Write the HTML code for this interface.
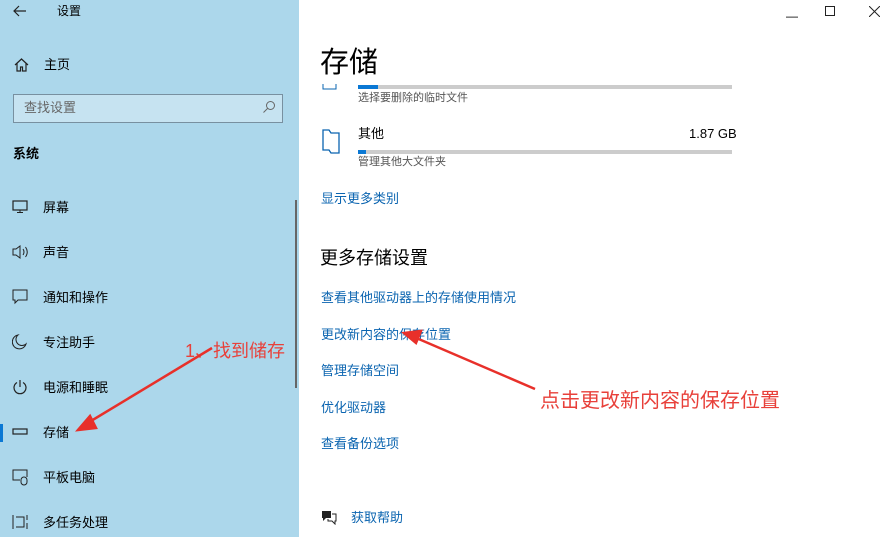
<!DOCTYPE html>
<html><head><meta charset="utf-8"><style>
*{margin:0;padding:0;box-sizing:border-box}
body{width:889px;height:537px;overflow:hidden;position:relative;background:#fff;font-family:"Liberation Sans","Noto Sans CJK SC",sans-serif;color:#000}
.side{position:absolute;left:0;top:0;width:299px;height:537px;background:#acd7eb}
.t{position:absolute;white-space:nowrap;line-height:1}
.s13{font-size:13px}
.lk{color:#0a64b0;font-size:13px}
.bar{position:absolute;height:4px;background:#ccc}
.bar i{position:absolute;left:0;top:0;height:4px;background:#0a78d4}
svg{position:absolute}
</style></head><body>
<div class="side"></div>
<svg style="left:12px;top:4px" width="16" height="14"><path d="M14 7H2M7 2L2 7l5 5" stroke="#222" fill="none" stroke-width="1.2"/></svg>
<div class="t s13" style="left:57px;top:5px;font-size:12px">设置</div>
<svg style="left:14px;top:57px" width="15" height="15"><path d="M1 8L7.5 2 14 8M3 6.5V14h3.5v-4h2v4H12V6.5" stroke="#222" fill="none" stroke-width="1.2"/></svg>
<div class="t s13" style="left:44px;top:58px">主页</div>
<div style="position:absolute;left:13px;top:94px;width:270px;height:29px;border:1.5px solid #7890a0;background:#c6e3f1"></div>
<div class="t s13" style="left:24px;top:101px;color:#666">查找设置</div>
<svg style="left:262px;top:100px" width="14" height="14"><circle cx="8.5" cy="5.5" r="4" stroke="#666" fill="none"/><path d="M6 8L1.5 12.5" stroke="#666"/></svg>
<div class="t s13" style="left:13px;top:147px;font-weight:bold">系统</div>
<svg style="left:12px;top:200px" width="16" height="14"><rect x="1" y="1" width="14" height="9" stroke="#222" fill="none" stroke-width="1.2"/><path d="M5 12.5h6M8 10v2" stroke="#222"/></svg>
<div class="t s13" style="left:43px;top:201px">屏幕</div>
<svg style="left:12px;top:244px" width="18" height="16"><path d="M1 5h3l4-3v12l-4-3H1z" stroke="#222" fill="none"/><path d="M11 5q2 3 0 6M13.5 3q3.5 5 0 10" stroke="#222" fill="none"/></svg>
<div class="t s13" style="left:43px;top:246px">声音</div>
<svg style="left:12px;top:289px" width="16" height="16"><path d="M1 1h14v10H6l-3 3v-3H1z" stroke="#222" fill="none"/></svg>
<div class="t s13" style="left:43px;top:291px">通知和操作</div>
<svg style="left:12px;top:334px" width="16" height="16"><path d="M6 1a7 7 0 1 0 8 9A6 6 0 0 1 6 1z" stroke="#222" fill="none"/></svg>
<div class="t s13" style="left:43px;top:336px">专注助手</div>
<svg style="left:12px;top:379px" width="16" height="16"><path d="M5 3.5a6 6 0 1 0 6 0M8 1v7" stroke="#222" fill="none" stroke-width="1.2"/></svg>
<div class="t s13" style="left:43px;top:381px">电源和睡眠</div>
<div style="position:absolute;left:0;top:424px;width:3px;height:18px;background:#0a78d4"></div>
<svg style="left:12px;top:427px" width="16" height="10"><rect x="1" y="2" width="14" height="5" stroke="#222" fill="none" stroke-width="1.2"/></svg>
<div class="t s13" style="left:43px;top:426px">存储</div>
<svg style="left:12px;top:469px" width="18" height="18"><path d="M8 11H1V1h14v7" stroke="#222" fill="none"/><rect x="9" y="8" width="6" height="8" rx="3" stroke="#222" fill="none"/></svg>
<div class="t s13" style="left:43px;top:471px">平板电脑</div>
<svg style="left:12px;top:514px" width="18" height="16"><path d="M1 1v14M4 3h8v10H4M15 1v5M15 9v6" stroke="#222" fill="none"/></svg>
<div class="t s13" style="left:43px;top:516px">多任务处理</div>
<div style="position:absolute;left:295px;top:200px;width:2px;height:188px;background:#666"></div>

<div class="t" style="left:786px;top:10px;font-size:12px">—</div>
<div style="position:absolute;left:825px;top:6px;width:10px;height:10px;border:1px solid #222"></div>
<svg style="left:869px;top:6px" width="11" height="11"><path d="M0 0L11 11M11 0L0 11" stroke="#222"/></svg>

<div class="t" style="left:320px;top:49px;font-size:29px">存储</div>
<svg style="left:322px;top:84px" width="16" height="8"><path d="M1 0v5h13V0" stroke="#0a64b0" fill="none"/></svg>
<div class="bar" style="left:358px;top:85px;width:374px"><i style="width:20px"></i></div>
<div class="t" style="left:358px;top:93px;font-size:11px;color:#555">选择要删除的临时文件</div>
<svg style="left:322px;top:129px" width="18" height="25"><path d="M1 1h6l2 3h8v20H9l-2-3H1z" stroke="#0a64b0" fill="none" stroke-width="1.3"/></svg>
<div class="t s13" style="left:358px;top:127px">其他</div>
<div class="t" style="left:689px;top:127px;font-size:13px">1.87 GB</div>
<div class="bar" style="left:358px;top:150px;width:374px"><i style="width:8px"></i></div>
<div class="t" style="left:358px;top:157px;font-size:11px;color:#555">管理其他大文件夹</div>
<div class="t lk" style="left:321px;top:192px">显示更多类别</div>
<div class="t" style="left:320px;top:249px;font-size:18px">更多存储设置</div>
<div class="t lk" style="left:321px;top:291px">查看其他驱动器上的存储使用情况</div>
<div class="t lk" style="left:321px;top:328px">更改新内容的保存位置</div>
<div class="t lk" style="left:321px;top:364px">管理存储空间</div>
<div class="t lk" style="left:321px;top:401px">优化驱动器</div>
<div class="t lk" style="left:321px;top:437px">查看备份选项</div>
<svg style="left:320px;top:509px" width="18" height="16"><path d="M2 2h9v7H6l-3 3V9H2z" fill="#222"/><path d="M12 5h4v7h-1v3l-3-3H8v-2" stroke="#222" fill="none"/></svg>
<div class="t lk" style="left:351px;top:511px">获取帮助</div>

<div class="t" style="left:185px;top:342px;font-size:18px;color:#e8403a">1、找到储存</div>
<div class="t" style="left:540px;top:391px;font-size:20px;color:#e8403a">点击更改新内容的保存位置</div>
<svg style="left:0;top:0" width="889" height="537"><g stroke="#e8302a" stroke-width="2.5" fill="#e8302a">
<path d="M212 348L86 424"/><path d="M78 430L90 416L96 428Z"/>
<path d="M535 389L414 337"/><path d="M404 333L421 331L416 343Z"/></g></svg>
</body></html>
